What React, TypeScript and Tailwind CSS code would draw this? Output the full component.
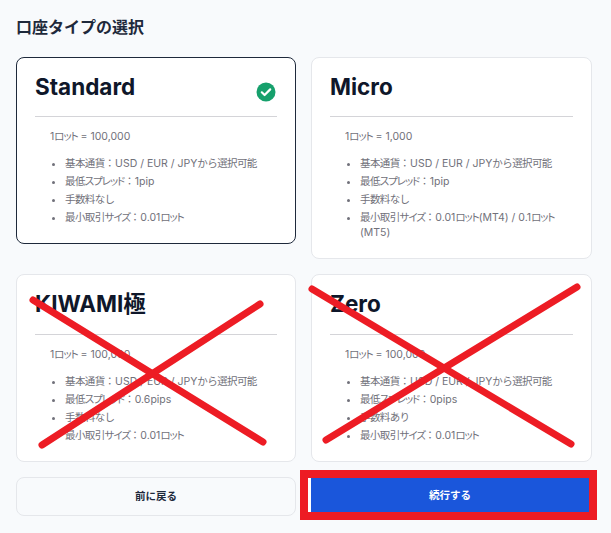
import React from "react";

type Plan = { name: string; lot: string; items: string[]; selected?: boolean; tall?: boolean; cross?: number[] };

const plans: Plan[] = [
  { name: "Standard", lot: "1ロット = 100,000", selected: true, items: ["基本通貨：USD / EUR / JPYから選択可能", "最低スプレッド：1pip", "手数料なし", "最小取引サイズ：0.01ロット"] },
  { name: "Micro", lot: "1ロット = 1,000", items: ["基本通貨：USD / EUR / JPYから選択可能", "最低スプレッド：1pip", "手数料なし", "最小取引サイズ：0.01ロット(MT4) / 0.1ロット(MT5)"] },
  { name: "KIWAMI極", lot: "1ロット = 100,000", tall: true, items: ["基本通貨：USD / EUR / JPYから選択可能", "最低スプレッド：0.6pips", "手数料なし", "最小取引サイズ：0.01ロット"], cross: [16, 25, 246, 167, 243, 29, 25, 170] },
  { name: "Zero", lot: "1ロット = 100,000", tall: true, items: ["基本通貨：USD / EUR / JPYから選択可能", "最低スプレッド：0pips", "手数料あり", "最小取引サイズ：0.01ロット"], cross: [0, 14, 259, 169, 265, 12, 14, 165] },
];

// In the picture the small CJK text is set tighter than its nominal size, katakana most of all.
function Mixed({ text }: { text: string }) {
  const runs = text.match(/[\u30a0-\u30ff]+|[\u3040-\u309f\u4e00-\u9fff]+|[^\u30a0-\u30ff\u3040-\u309f\u4e00-\u9fff]+/g) ?? [];
  return (
    <>
      {runs.map((r, i) => {
        if (/[\u30a0-\u30ff]/.test(r)) return <span key={i} className="tracking-[-1.1px] [font-feature-settings:'palt']">{r}</span>;
        if (/[\u3040-\u309f\u4e00-\u9fff]/.test(r)) return <span key={i} className="tracking-[-0.6px]">{r}</span>;
        return <span key={i}>{r}</span>;
      })}
    </>
  );
}

function Card({ plan }: { plan: Plan }) {
  return (
    <div className={`relative self-start bg-white rounded-lg border px-[18px] ${plan.selected ? "border-[#1e293b]" : "border-[#e5e7eb]"} ${plan.tall ? "h-[188px] pt-[11px]" : "pt-[10px] pb-[15px]"}`}>
      <div className="flex items-center justify-between border-b border-[#d4d4d8] h-[49px]">
        <h2 className={`text-[22.5px] font-bold text-[#0f172a] leading-[27px] ${plan.tall ? "-mt-[14px]" : "-mt-[12px]"}`}>{plan.name}</h2>
        {plan.selected && (
          <svg viewBox="0 0 20 20" className="w-5 h-5 mr-[1.5px] -mt-[1px]">
            <circle cx="10" cy="10" r="9.5" fill="#16a06c" />
            <path d="M5.8 10.3l2.8 2.7 5.6-5.6" fill="none" stroke="#fff" strokeWidth="2.2" strokeLinecap="round" strokeLinejoin="round" />
          </svg>
        )}
      </div>
      <div className="pl-[15px] pt-[12px] text-[10.5px] text-[#71717a]">
        <p className="leading-[16px] mb-[11px]"><Mixed text={plan.lot} /></p>
        <ul className="list-disc pl-[15px]">
          {plan.items.map((t) => (
            <li key={t} className="leading-[15px] mb-[3px]"><Mixed text={t} /></li>
          ))}
        </ul>
      </div>
      {plan.cross && (
        <svg className="absolute left-0 top-0 w-[278px] h-[186px] overflow-visible pointer-events-none" viewBox="0 0 278 186">
          <line x1={plan.cross[0]} y1={plan.cross[1]} x2={plan.cross[2]} y2={plan.cross[3]} stroke="#ed1c24" strokeWidth="7" strokeLinecap="round" />
          <line x1={plan.cross[4]} y1={plan.cross[5]} x2={plan.cross[6]} y2={plan.cross[7]} stroke="#ed1c24" strokeWidth="7" strokeLinecap="round" />
        </svg>
      )}
    </div>
  );
}

export default function App() {
  return (
    <div className="min-h-[533px] bg-[#f8fafc] px-4 pt-4 font-['Inter','Noto_Sans_CJK_JP',sans-serif]">
      <div className="w-[576px]">
        <h1 className="text-base font-semibold leading-[22px] text-[#1e293b] mb-[19px]">口座タイプの選択</h1>
        <div className="grid grid-cols-[280px_281px] gap-x-[15px] gap-y-[15px] items-start">
          {plans.map((p) => (
            <Card key={p.name} plan={p} />
          ))}
        </div>
        <div className="grid grid-cols-[280px_281px] gap-x-[15px] mt-[15px]">
          <button className="h-[39px] rounded-lg border border-[#e5e7eb] text-[10.5px] font-semibold text-[#1e293b]">前に戻る</button>
          <div className="relative">
            <button className="-ml-[3px] w-[281px] h-[35px] mt-[1px] border-l-[3px] border-white bg-[#1a56db] text-[10.5px] font-semibold text-white block">続行する</button>
            <div className="absolute left-[-11px] top-[-7px] w-[297px] h-[50px] border-[8px] border-[#ed1c24] pointer-events-none" />
          </div>
        </div>
      </div>
    </div>
  );
}
